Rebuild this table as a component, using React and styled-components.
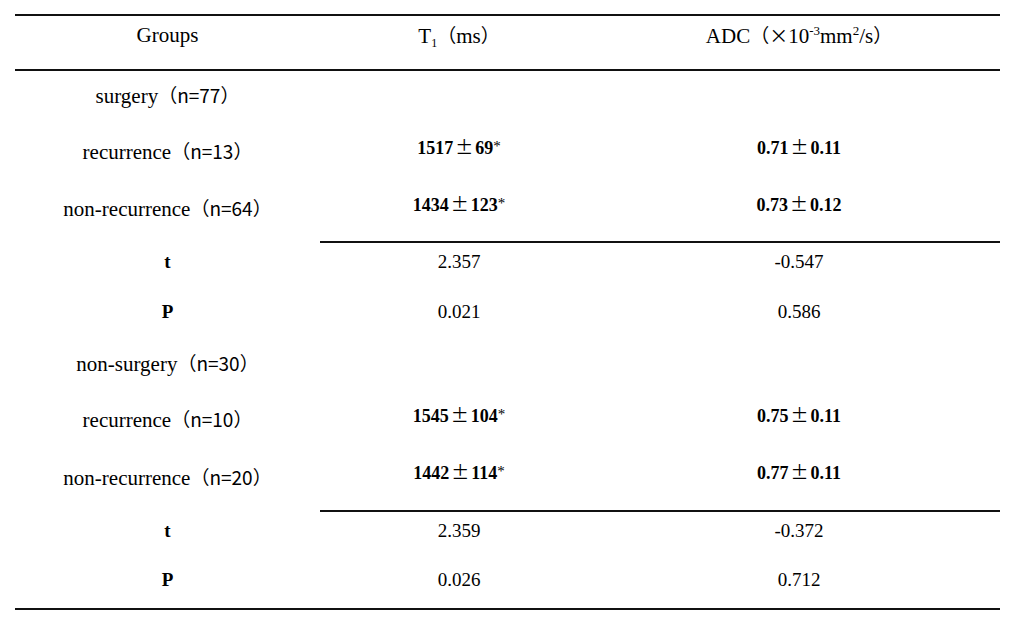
import styled, { createGlobalStyle } from "styled-components";

const GlobalStyle = createGlobalStyle`
  body {
    margin: 0;
    background: #fff;
    color: #000;
    font-family: "Liberation Serif", "Times New Roman", serif;
  }
`;

const Page = styled.div`
  width: 1015px;
  height: 625px;
  padding: 14px 15px 0 15px;
  box-sizing: border-box;
`;

const Table = styled.div`
  width: 985px;
  display: flex;
  flex-direction: column;
  border-bottom: 2px solid #111;
`;

const Row = styled.div`
  display: grid;
  grid-template-columns: 305px 278px 402px;
  height: ${props => props.h}px;
  box-sizing: border-box;
  border-top: ${props => (props.head ? "2px solid #111" : "none")};
  border-bottom: ${props => (props.head ? "2px solid #111" : "none")};
`;

// shift > 0 lifts the content, shift < 0 lowers it
const Cell = styled.div`
  display: flex;
  align-items: center;
  justify-content: center;
  box-sizing: border-box;
  padding-bottom: ${props => Math.max(0, (props.shift || 0) * 2)}px;
  padding-top: ${props => Math.max(0, -(props.shift || 0) * 2)}px;
  border-top: ${props => (props.rule ? "2px solid #111" : props.gap ? "2px solid transparent" : "none")};
  line-height: 24px;
  white-space: nowrap;
`;

const Label = styled.span`
  font-size: 21px;
`;

const Cjk = styled.span`
  font-family: "Noto Sans CJK SC", sans-serif;
  font-size: ${props => props.size || 19}px;
`;

const Stat = styled.span`
  font-size: 19px;
  font-weight: bold;
`;

const Mean = styled.span`
  font-size: 18px;
  font-weight: bold;
`;

const Pm = styled.span`
  font-family: "Noto Sans CJK SC", sans-serif;
  font-weight: normal;
  font-size: 18px;
  margin: 0 2px;
`;

const Star = styled.sup`
  font-size: 15px;
  font-weight: normal;
  vertical-align: 3px;
  line-height: 0;
`;

const Value = styled.span`
  font-size: 19px;
`;

const Sub = styled.sub`
  font-size: 12px;
  vertical-align: -4px;
  line-height: 0;
`;

const Sup = styled.sup`
  font-size: 13px;
  vertical-align: 8px;
  line-height: 0;
`;

const GroupLabel = ({ name, n }) => (
  <Label>
    {name}
    <Cjk>（n={n}）</Cjk>
  </Label>
);

const MeanSd = ({ mean, sd, star }) => (
  <Mean>
    {mean}
    <Pm>±</Pm>
    {sd}
    {star && <Star>*</Star>}
  </Mean>
);

const blocks = [
  {
    name: "surgery",
    n: 77,
    head: { h: 51, shift: 1.5 },
    groups: [
      { name: "recurrence", n: 13, t1: ["1517", "69"], adc: ["0.71", "0.11"], h: 57, shift: -1, num: 4 },
      { name: "non-recurrence", n: 64, t1: ["1434", "123"], adc: ["0.73", "0.12"], h: 62, shift: 1.5, num: 6.5 },
    ],
    t: { t1: "2.357", adc: "-0.547", h: 46, shift: 3 },
    p: { t1: "0.021", adc: "0.586", h: 49, shift: 0 },
  },
  {
    name: "non-surgery",
    n: 30,
    head: { h: 54, shift: -0.5 },
    groups: [
      { name: "recurrence", n: 10, t1: ["1545", "104"], adc: ["0.75", "0.11"], h: 57, shift: -1, num: 4 },
      { name: "non-recurrence", n: 20, t1: ["1442", "114"], adc: ["0.77", "0.11"], h: 63, shift: 1, num: 7 },
    ],
    t: { t1: "2.359", adc: "-0.372", h: 46, shift: 3 },
    p: { t1: "0.026", adc: "0.712", h: 52, shift: 2 },
  },
];

const App = () => {
  return (
    <Page>
      <GlobalStyle />
      <Table>
        <Row head h={57}>
          <Cell shift={7.5}>
            <Label>Groups</Label>
          </Cell>
          <Cell shift={7.5}>
            <Label>
              T<Sub>1</Sub>
              <Cjk>（</Cjk>ms<Cjk>）</Cjk>
            </Label>
          </Cell>
          <Cell shift={7.5}>
            <Label>
              ADC<Cjk>（×</Cjk>10<Sup>-3</Sup>mm<Sup>2</Sup>/s<Cjk>）</Cjk>
            </Label>
          </Cell>
        </Row>

        {blocks.map(block => (
          <div key={block.name}>
            <Row h={block.head.h}>
              <Cell shift={block.head.shift}>
                <GroupLabel name={block.name} n={block.n} />
              </Cell>
              <Cell />
              <Cell />
            </Row>
            {block.groups.map(g => (
              <Row key={g.name} h={g.h}>
                <Cell shift={g.shift}>
                  <GroupLabel name={g.name} n={g.n} />
                </Cell>
                <Cell shift={g.num}>
                  <MeanSd mean={g.t1[0]} sd={g.t1[1]} star />
                </Cell>
                <Cell shift={g.num}>
                  <MeanSd mean={g.adc[0]} sd={g.adc[1]} />
                </Cell>
              </Row>
            ))}
            <Row h={block.t.h}>
              <Cell gap shift={block.t.shift}>
                <Stat>t</Stat>
              </Cell>
              <Cell rule shift={block.t.shift}>
                <Value>{block.t.t1}</Value>
              </Cell>
              <Cell rule shift={block.t.shift}>
                <Value>{block.t.adc}</Value>
              </Cell>
            </Row>
            <Row h={block.p.h}>
              <Cell shift={block.p.shift}>
                <Stat>P</Stat>
              </Cell>
              <Cell shift={block.p.shift}>
                <Value>{block.p.t1}</Value>
              </Cell>
              <Cell shift={block.p.shift}>
                <Value>{block.p.adc}</Value>
              </Cell>
            </Row>
          </div>
        ))}
      </Table>
    </Page>
  );
};

export default App;
